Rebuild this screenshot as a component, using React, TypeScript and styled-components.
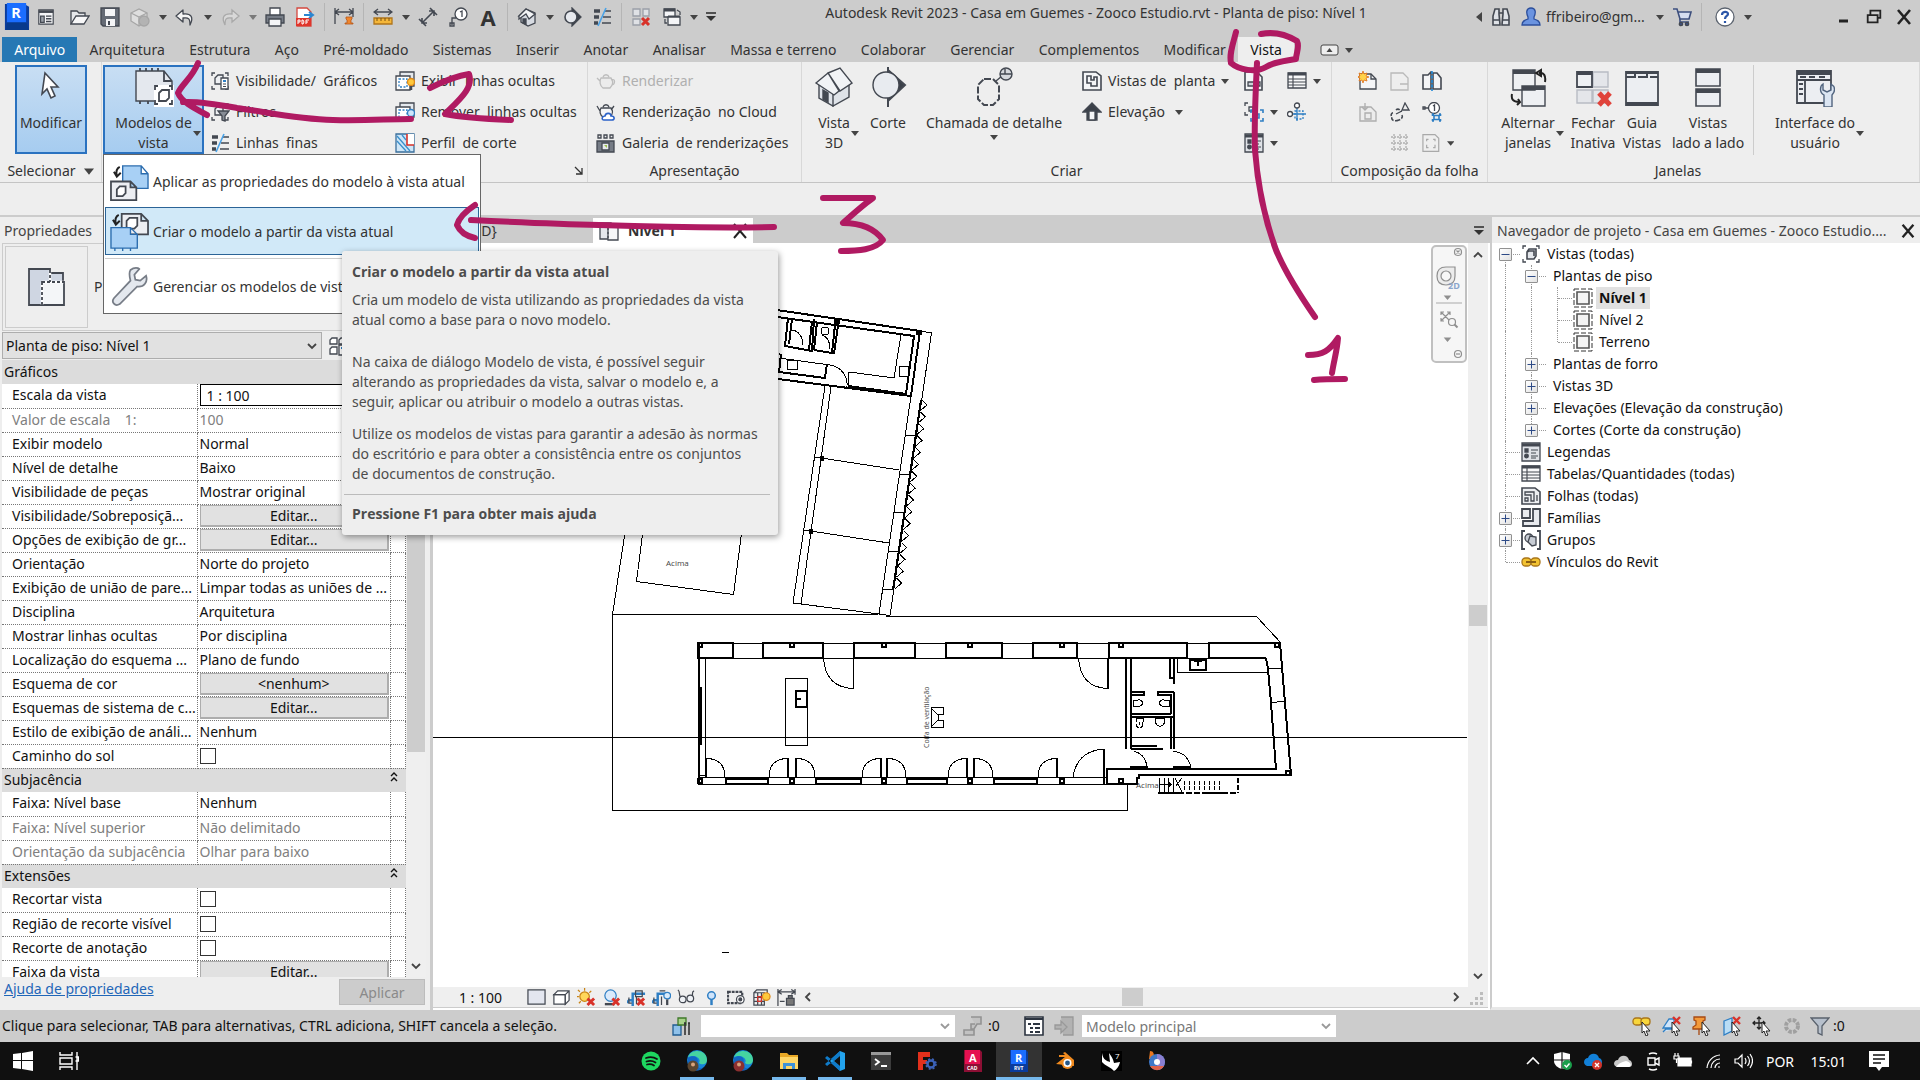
import React from "react";
import styled, { createGlobalStyle, css } from "styled-components";

const INK = "#434851";
const BLUE = "#2f7fc4";
const RED = "#d8322a";
const MARK = "#b01a62";

const Global = createGlobalStyle`
  *, *::before, *::after { box-sizing: border-box; }
  html, body { margin: 0; padding: 0; }
  body, button, input, select { font-family: "Noto Sans", "Open Sans", sans-serif; font-size: 14px; color: #333; }
  button { background: none; border: 0; padding: 0; margin: 0; cursor: default; white-space: nowrap; }
`;

/* ---------- icons ---------- */

const house = (
  <>
    <path d="M2 9 9 2l9 4v10l-7 3-7-4V9z" fill="#d7dbe2" />
    <path d="M2 9 9 2l9 5-6 5-3-5-7 5z" fill="#f3f4f6" />
    <path d="M6 12h3v5l-3-1z" fill={INK} />
  </>
);
const thinLines = (
  <>
    <path d="M2 4h6M2 10h5M2 16h4" strokeWidth="3.4" />
    <path d="M13 4h6M11 10h8M10 16h9" strokeWidth="1.4" />
    <path d="M14 1 6 19" stroke="#4aa3e8" strokeWidth="1.6" />
  </>
);
const sheet = <path d="M2 3h11l5 5v10H2z" fill="#f4f5f7" />;
const redX = <path d="m11 11 7 7m0-7-7 7" stroke={RED} strokeWidth="3" />;
const cursor = <path d="m10 6 8 9h-4l2 4-2 1-2-5-2 2z" fill="#fff" stroke="#222" strokeWidth="1" />;
const corners = <path d="M5 2H2v3M15 2h3v3M5 18H2v-3M15 18h3v-3" />;

const glyphs: Record<string, React.ReactNode> = {
  home: (
    <>
      <path d="M2 2h16v16H2z" fill="#f4f5f7" />
      <path d="M2 4h16" strokeWidth="3" />
      <path d="M4 9h4v7H4z" fill="#9aa0a8" />
      <path d="M10 9h6M10 12h6M10 15h6" strokeWidth="1.6" />
    </>
  ),
  open: (
    <>
      <path d="M1 17V4h6l2 2h6v3" fill="#e5e7ea" />
      <path d="M1 17 6 9h13l-5 8z" fill="#f7f7f8" />
    </>
  ),
  save: (
    <>
      <path d="M1 1h18v18H3l-2-2z" fill="#656b75" />
      <path d="M5 2h10v7H5z" fill="#f4f5f7" stroke="none" />
      <path d="M6 12h9v7H6z" fill="#f4f5f7" stroke="none" />
      <path d="M8 14h2v4H8z" fill={INK} stroke="none" />
    </>
  ),
  sync: (
    <g stroke="#a6a6a6">
      <path d="m1 6 8-4 8 4v8l-8 5-8-5z" fill="#dedede" />
      <path d="m1 6 8 4 8-4M9 10v9" />
      <circle cx="14" cy="14" r="5" fill="#b3b3b3" />
    </g>
  ),
  undo: <path d="M8 3 1 9l7 6v-4c6-1 7 1 7 7 4-8 1-12-7-11z" fill="#f4f4f4" strokeLinejoin="round" />,
  redo: <path d="m12 3 7 6-7 6v-4c-6-1-7 1-7 7-4-8-1-12 7-11z" fill="#d8d8d8" stroke="#a9a9a9" />,
  print: (
    <>
      <path d="M5 8V1h10v7" fill="#fff" />
      <path d="M1 8h18v8H1z" fill="#767c86" />
      <path d="M4 12h12v7H4z" fill="#f4f5f7" />
    </>
  ),
  pdf: (
    <>
      <path d="M2 1h10l4 4v14H2z" fill="#fff" stroke="#d4483f" />
      <path d="M1 11h15v8H1z" fill="#e0352b" stroke="none" />
      <path d="M9 8h8m-3-3 4 3-4 3" stroke="#2b86d1" strokeWidth="2" />
      <path d="M3 17v-4h2v2H3m4 2v-4h1l1 2-1 2zm4 0v-4h3m-3 2h2" stroke="#fff" strokeWidth="1" />
    </>
  ),
  dim: (
    <>
      <path d="M1 1v16M19 1v9M1 5h18M5 2 1 5l4 3M15 2l4 3-4 3" />
      <path d="M12 10h6v2l-1 1v3h2v1h-8v-1h2v-3l-1-1z" fill="#f0862e" stroke="#b4551a" strokeWidth=".8" />
    </>
  ),
  ruler: (
    <>
      <path d="M1 5h18M5 2 1 5l4 3M15 2l4 3-4 3" />
      <path d="M1 11h18v6H1z" fill="#f5b73a" stroke="#b0761b" />
      <path d="M4 11v3M8 11v3M12 11v3M16 11v3" stroke="#7a5212" strokeWidth="1" />
    </>
  ),
  diag: <path d="M4 16 16 4M1 12l7 7M12 1l7 7M4 11v5h5M11 4h5v5" strokeWidth="1.6" />,
  tag: (
    <>
      <circle cx="13" cy="7" r="6" fill="#fff" />
      <path d="m12 5 2-1v6M4 18v-7h4M2 16h4v3H2z" />
    </>
  ),
  house,
  section: (
    <>
      <path d="m10 1 9 9-9 9z" fill="#3b4049" />
      <circle cx="9" cy="10" r="6" fill="#e6e9ee" strokeWidth="1.6" />
    </>
  ),
  thinLines,
  closeInactive: (
    <>
      <path d="M2 2h7v7H2zM12 2h6v7h-6zM2 12h7v6H2z" fill="#dfe1e5" stroke="#9a9fa8" />
      {redX}
    </>
  ),
  switchWin: (
    <>
      <path d="M3 2h11v8H3z" fill="#f4f5f7" />
      <path d="M3 3h11M7 10h12" strokeWidth="3" />
      <path d="M7 10h12v8H7zM16 3l3 2v3M4 12v4h2" fill="#f4f5f7" />
    </>
  ),
  binoculars: (
    <>
      <path d="M4 2h4v5l1 11H2V9zM16 2h-4v5l-1 11h7V9z" fill="#dfe2e7" strokeWidth="1.6" />
      <path d="M2 13h7M11 13h7M8 6h4" strokeWidth="1.6" />
    </>
  ),
  user: (
    <path d="M10 1c5 0 5 5 3 9v2c3 1 6 2 6 6H1c0-4 3-5 6-6v-2C5 6 5 1 10 1z" fill="#6a93e0" stroke="#2c4f9c" />
  ),
  cart: (
    <>
      <path d="M1 2h4l3 10h9l2-7H6" fill="#d6def0" stroke="#3d4f7d" strokeWidth="1.6" />
      <path d="M8 12v3h9" stroke="#3d4f7d" strokeWidth="1.6" />
      <circle cx="9" cy="17" r="1.7" fill="#3d4f7d" />
      <circle cx="15" cy="17" r="1.7" fill="#3d4f7d" />
    </>
  ),
  help: (
    <>
      <circle cx="10" cy="10" r="9" fill="#fff" stroke="#5c6470" />
      <path d="M7 8c0-4 6-4 6-1 0 2-3 2-3 5m0 2v2" stroke="#2b56a8" strokeWidth="2.2" />
    </>
  ),
  minimize: <path d="M5 14h9" stroke="#222" strokeWidth="3" />,
  restore: (
    <>
      <path d="M6 3h11v8H6z" stroke="#222" strokeWidth="2" />
      <path d="M3 8h11v8H3z" fill="#ccc" stroke="#222" strokeWidth="2" />
    </>
  ),
  close: <path d="m4 3 12 14M16 3 4 17" stroke="#222" strokeWidth="2.6" />,
  closeThin: <path d="m4 3 12 14M16 3 4 17" stroke="#222" strokeWidth="2" />,
  visibility: (
    <>
      {corners}
      <path d="M5 7l3-3h5v9H5z" fill="#eef0f3" />
      <path d="M11 7h7v11h-7z" fill="#fff" />
      <path d="M13 10h3" stroke={BLUE} strokeWidth="2" />
      <path d="M13 13h3M13 15.500h3" strokeWidth="1" />
    </>
  ),
  filter: (
    <>
      {corners}
      <path d="M5 7l3-3h5v9H5z" fill="#eef0f3" />
      <path d="M8 9h11l-4 5v5l-3-1v-4z" fill="#868c95" />
    </>
  ),
  hiddenShow: (
    <>
      <path d="M5 1h14v14H5z" fill="#e5e9ee" />
      <path d="M1 5h14v14H1z" fill="#fff" />
      <path d="M4 8h8v8H4z" stroke={BLUE} strokeDasharray="2 1.500" />
      <circle cx="16" cy="11" r="3.500" fill="#ffc93d" stroke="#e08a1a" />
      <path d="M16 15v4" strokeWidth="2.500" />
    </>
  ),
  hiddenRemove: (
    <>
      <path d="M5 1h14v14H5z" fill="#e5e9ee" />
      <path d="M1 5h14v14H1z" fill="#fff" />
      <path d="M4 8h8v8H4z" stroke={BLUE} strokeDasharray="2 1.500" />
      <circle cx="16" cy="11" r="3.500" fill="#cfe5fa" stroke={BLUE} />
      <path d="M16 15v4" strokeWidth="2.500" />
    </>
  ),
  cutProfile: (
    <>
      <path d="M1 1h18v18H1z" fill="#cfe6f7" stroke="#3a6f9c" />
      <path d="m2 8 9 10M2 3l13 15M7 2l4 5" stroke="#3a8fcc" />
      <path d="M12 1h7v11h-7z" fill="#fff" stroke="none" />
      <path d="M12 1v11h7" stroke={RED} strokeWidth="1.600" />
    </>
  ),
  teapot: (
    <g stroke="#bdbdbd">
      <path d="M5 7h10c3 4 1 8-1 10H7C4 15 3 10 5 7zM7 6c1-3 5-3 6 0M4 10 1 7M15 9c5-2 4 4 1 5" fill="#ececec" />
    </g>
  ),
  teapotCloud: (
    <>
      <path d="M5 6h10c3 4 1 7-1 9H7C4 13 3 9 5 6zM7 5c1-3 5-3 6 0M4 9 1 4M15 8l3-4" fill="#f4f5f7" />
      <path d="M8 18c-3 0-2-4 1-4 1-4 6-3 6 0 4 0 4 4 1 4z" fill="#fff" stroke="#2b62c9" strokeWidth="1.600" />
    </>
  ),
  gallery: (
    <>
      <path d="M1 8h17v11H1z" fill="#767c86" />
      <path d="M2 2h3v3H2zM8 2h3v3H8zM14 2h3v3h-3z" />
      <path d="M6 10h7v7H6z" fill="#e8eaed" />
      <path d="M8 12h3v3z" fill="#9ac04b" stroke="none" />
    </>
  ),
  plan: (
    <>
      <path d="M1 1h13l5 4v14H1z" fill="#f4f5f7" strokeWidth="1.600" />
      <path d="M5 5h4v4h3V6h3v9H9v-3H5z" strokeWidth="1.600" />
    </>
  ),
  elevation: (
    <>
      <path d="M10 1 1 10h4v8h10v-8h4z" fill="#3b4049" />
      <path d="M7 9h6v9H7z" fill="#f4f5f7" />
    </>
  ),
  draft: (
    <>
      <path d="M1 1h12l5 5v13H1z" fill="#f4f5f7" strokeWidth="1.600" />
      <path d="M4 11h12v4H4z" fill="#cdd1d8" />
    </>
  ),
  duplicate: (
    <>
      <path d="M4 1H1v3M10 1h3M1 10v3h3M5 5h4v4H5z" />
      <path d="M10 8H7v3M16 8h3v3M7 16v3h3M19 16v3h-3M11 12h4v4h-4z" stroke={BLUE} strokeWidth="1.600" />
    </>
  ),
  legend: (
    <>
      <path d="M1 1h18v18H1z" fill="#dfe2e7" />
      <path d="M1 3h18" strokeWidth="3" />
      <path d="M4 7h3v3H4z" fill={INK} />
      <circle cx="5.500" cy="14" r="1.800" fill={INK} />
      <path d="M10 8h7M10 11h5M10 14h7M10 16h5" strokeWidth="1.200" />
    </>
  ),
  schedule: (
    <>
      <path d="M1 2h18v15H1z" fill="#f8f8f9" />
      <path d="M1 3h18" strokeWidth="3" />
      <path d="M1 8h18M1 11h18M1 14h18M6 3v14" strokeWidth="1.100" />
    </>
  ),
  scope: (
    <>
      <path d="M8 9h8v8H8z" stroke={BLUE} strokeDasharray="2 1.500" />
      <path d="M10 6v13M4 12h15" stroke={BLUE} />
      <circle cx="10" cy="3.500" r="2.500" fill="#fff" />
      <circle cx="3" cy="12" r="2.500" fill="#fff" />
    </>
  ),
  sheetNew: (
    <>
      {sheet}
      <path d="M13 3v5h5" />
      <path d="m5 0 1 3 3-1-1 3 3 1-3 1 1 3-3-1-1 3-1-3-3 1 1-3-3-1 3-1-1-3 3 1z" fill="#ffd24a" stroke="#e0701a" strokeWidth=".8" />
    </>
  ),
  titleBlock: (
    <g stroke="#b9b9b9">
      <path d="M1 2h12l5 5v12H1zM10 13h8v6" />
    </g>
  ),
  matchline: (
    <>
      <path d="M1 4h5l3-3v17H1zM19 7l-4-5h-4v16h8z" fill="#f4f5f7" strokeWidth="1.600" />
      <path d="M10 0v20" stroke="#1f88d8" strokeWidth="1.600" strokeDasharray="3 1.500" />
    </>
  ),
  revision: (
    <g stroke="#adadad">
      <path d="M2 5h11l5 5v9H2z" fill="#ececec" />
      <path d="M7 1v6m-3-2 3 3 3-3M7 11h6v6H7z" />
    </g>
  ),
  placeView: (
    <>
      <path d="M9 18c-5 2-8 0-7-3-2-2 0-5 2-4M6 8c2-2 5 0 5 2M12 13c1 2 0 4-3 5" strokeDasharray="4 1.500" strokeWidth="1.600" />
      <path d="m15 1 4 7h-7zM6 12l6-3" />
    </>
  ),
  guide: (
    <>
      <circle cx="12" cy="6" r="5.500" fill="#fff" />
      <path d="m11 4 1.500-1v6M1 5h2v2H1zM3 6h3" />
      <path d="M10 12h2M17 12h2M10 19h2M17 19h2M12 13.500h5v4h-5zM10.500 12v2M18.500 12v2M10.500 17v2M18.500 17v2" stroke={BLUE} strokeWidth="1.600" />
    </>
  ),
  gridFaint: <path d="M4 1v18M10 1v18M16 1v18M1 4h18M1 10h18M1 16h18" stroke="#aeaeae" strokeDasharray="2 1" />,
  viewport: (
    <g stroke="#a9a9a9">
      <path d="M1 1h13l4 4v14H1z" fill="#efefef" />
      <path d="M5 8V6h2M12 6h2v2M14 12v3h-2M7 15H5v-3" />
    </g>
  ),
  editType: (
    <>
      <path d="M2 4l2-2h5v6H2zM11 4l2-2h5v6h-7zM2 13l2-2h5v7H2z" fill="#fff" />
      <path d="M11 9h8v10h-8z" fill="#fff" />
      <path d="M13 12h4" stroke={BLUE} strokeWidth="2" />
    </>
  ),
  tabPlan: (
    <>
      <path d="M1 2h11v16H1z" fill="#e4e7ec" />
      <path d="M9 6h10v13H9z" fill="#f6f7f9" />
      <path d="M9 3v16" strokeDasharray="2 2" />
    </>
  ),
  views: (
    <>
      {corners}
      <path d="M6 8l2-3h7v7l-2 3H6zM6 8l2-1h5v5" fill="#e4e7ec" strokeWidth="1.600" />
    </>
  ),
  level: (
    <>
      <path d="M1 1h18v18H1z" stroke="#333" strokeWidth="1" strokeDasharray="5 2" />
      <path d="M4 4h12v12H4z" fill="#f4f4f4" stroke="#555" strokeWidth="1.600" />
    </>
  ),
  sheets: (
    <>
      <path d="M1 2h13l5 4v12H1z" fill="#eceef1" strokeWidth="1.600" />
      <path d="M4 6h9v9h-3V9H4zM4 12h3v3H4zM16 9v6" />
    </>
  ),
  families: <path d="M1 1h8v9H1zM12 1h7v17H2v-5h10z" fill="#e8eaee" strokeWidth="1.800" />,
  groups: (
    <>
      <path d="M4 1H1v18h3M16 1h3v18h-3" strokeWidth="1.800" />
      <circle cx="8" cy="8" r="4" fill="#c7ccd4" />
      <path d="m9 6 6 1v8l-4 1-4-4z" fill="#c7ccd4" />
    </>
  ),
  links: (
    <>
      <rect x="1" y="6" width="9" height="8" rx="3.500" fill="#f2c231" stroke="#a9761a" />
      <rect x="10" y="6" width="9" height="8" rx="3.500" fill="#f2c231" stroke="#a9761a" />
      <path d="M5 10h10" stroke="#8b5f12" strokeWidth="2" />
    </>
  ),
  detail: <path d="M1 2h18v15H1z" fill="#e3e6ef" />,
  cube: (
    <>
      <path d="M2 7h12v10H2z" fill="#fff" />
      <path d="m2 7 4-4h12v10l-4 4V7zM14 7l4-4" fill="#fff" />
    </>
  ),
  sun: (
    <>
      <circle cx="8" cy="9" r="5" fill="#ffd75a" stroke="#c98414" />
      <path d="M8 0v3M1 2l2 2M0 9h2M2 16l2-2M15 3l-2 2" stroke="#c98414" />
      {redX}
    </>
  ),
  shadow: (
    <>
      <circle cx="9" cy="8" r="6" fill="#dbeafb" stroke={BLUE} />
      <path d="M3 17h10" strokeWidth="2.500" />
      {redX}
    </>
  ),
  crop: (
    <>
      <path d="M6 19V6h13M1 13h5M1 16V13" stroke={BLUE} strokeWidth="2.600" />
      <path d="M9 3h7v6H9zM2 10v6h3M10 9v8" />
      {redX}
    </>
  ),
  cropShow: (
    <>
      <path d="M6 19V6h10M1 13h5M1 16V13" stroke={BLUE} strokeWidth="2.600" />
      <path d="M8 3h6M2 10v6h3M10 9v9" />
      <circle cx="16" cy="8" r="3.500" fill="#d9ebfb" stroke={BLUE} />
      <path d="M16 12v6" strokeWidth="2.400" />
    </>
  ),
  glasses: (
    <>
      <path d="M1 2c3 3 0 4 3 8M18 3c-3 1-1 3-2 6" />
      <circle cx="6" cy="12" r="3.500" fill="#eef1f5" />
      <circle cx="14" cy="11" r="3.500" fill="#eef1f5" />
    </>
  ),
  bulb: (
    <>
      <circle cx="10" cy="8" r="4" fill="#cfe4fb" stroke={BLUE} strokeWidth="1.600" />
      <path d="M10 12v6" stroke={BLUE} strokeWidth="2.600" />
    </>
  ),
  tempView: (
    <>
      <path d="M1 4h15v12H1z" strokeWidth="2.400" strokeDasharray="3 1" />
      <circle cx="14" cy="12" r="4" fill="#fff" />
      <circle cx="14" cy="12" r="1.500" fill={INK} />
    </>
  ),
  analytic: (
    <>
      <path d="M2 5h11v13H2zM2 10h11M2 14h11M6 5v13M10 5v13M2 5l3-3h11v8" />
      <path d="M6 9h4v5H6z" stroke={RED} />
      <circle cx="15" cy="9" r="4" fill="#ffc93d" stroke="#e08a1a" />
    </>
  ),
  constraints: (
    <>
      <path d="M1 1v18M19 1v6M1 4h18M5 1.500 1 4l4 2.500M15 1.500 19 4l-4 2.500M3 14h5" />
      <path d="M10 11h8v7h-8zM12 11V8h4v3" fill="#777" />
    </>
  ),
  worksets: (
    <>
      <path d="M1 9h8v10H1z" fill="#8fc1ea" stroke="#1f5c92" />
      <path d="M6 2h8v7H6z" fill="#a8d28a" stroke="#3f7a2a" />
      <path d="M13 7v12M17 7v12M12 7h2M16 7h2" stroke="#333" strokeWidth="1.600" />
    </>
  ),
  requests: <path d="M8 1h10v7h-4l-3 5H8V8h4M1 19h10v-5H1z" stroke="#939393" fill="#c2c2c2" strokeWidth="1.600" />,
  options: (
    <>
      <path d="M1 1h18v18H1z" fill="#fff" stroke="#2c3440" strokeWidth="1.600" />
      <path d="M1 3h18M4 8h3M9 8h7M6 12h3M11 12h5M6 16h3M11 16h5" stroke="#2c3440" strokeWidth="2" />
    </>
  ),
  addOption: <path d="M7 1h12v18H9M1 9h6V5l6 6-6 6v-4H1z" stroke="#999" fill="#b2b2b2" />,
  selLinks: (
    <>
      <rect x="1" y="2" width="9" height="7" rx="3" fill="#f8d63c" stroke="#a9761a" />
      <rect x="9" y="2" width="9" height="7" rx="3" fill="#f8d63c" stroke="#a9761a" />
      {cursor}
    </>
  ),
  selUnder: (
    <>
      <path d="m1 12 6-9h5v9zM1 16l3-3h8" fill="#cfe5fa" stroke={BLUE} />
      <path d="m11 1 7 7m0-7-7 7" stroke={RED} strokeWidth="2.400" />
      {cursor}
    </>
  ),
  selPinned: (
    <>
      <path d="M2 1h11v3l-2 1v4l3 2v2H1v-2l3-2V5L2 4zM7 13v6" fill="#f39a3a" stroke="#a84a12" />
      {cursor}
    </>
  ),
  selFace: (
    <>
      <path d="m2 5 8-3v13l-8 4z" fill="#b9ddf5" stroke={BLUE} />
      <path d="m11 1 7 7m0-7-7 7" stroke={RED} strokeWidth="2.400" />
      {cursor}
    </>
  ),
  selDrag: (
    <>
      <path d="M7 1v12M1 7h12M5 3l2-2 2 2M5 11l2 2 2-2M3 5 1 7l2 2M11 5l2 2-2 2" stroke="#222" />
      {cursor}
    </>
  ),
  progress: <circle cx="10" cy="10" r="6" stroke="#a0a0a0" strokeWidth="4" strokeDasharray="3.400 1.300" />,
  funnel: <path d="M1 2h18l-7 8v9l-4-2v-7z" fill="#b7c0cc" stroke="#59616c" />,
};

const largeGlyphs: Record<string, React.ReactNode> = {
  pointer: <path d="m14 6 13 14h-7l4 9-4 2-4-9-5 5z" fill="#fff" stroke={INK} strokeWidth="1.600" />,
  viewTemplate: (
    <>
      <path d="M2 4h28l8 10v20H2z" fill="#e4e8ee" />
      <path d="M30 4v10h8M6 1v3M12 1v3M18 1v3M24 1v3M6 34v3M14 34v3" strokeWidth="1.800" />
      <path d="M20 18h20v22H20z" fill="#fff" stroke="none" />
      <path d="M24 19h-3v4M35 19h3v4M21 33v4h3M38 33v4h-3M25 26l3-3h7v8l-3 3h-7z" strokeWidth="1.800" />
    </>
  ),
  house3d: (
    <>
      <path d="m5 17 14 7v15L5 31zM19 24l16-8v14l-16 9z" fill="#dfe3e9" />
      <path d="M2 16 14 6l11 18-5 4zM14 6 26 1l12 15-12 8z" fill="#f1f3f6" />
      <path d="m9 23 5 3v9l-5-3z" fill={INK} />
    </>
  ),
  sectionMark: (
    <>
      <path d="m20 3 17 15-17 16zM20 0v40" fill="#3b4049" strokeWidth="2" />
      <circle cx="18" cy="18" r="13" fill="#e8ebf0" />
    </>
  ),
  callout: (
    <>
      <path d="M10 12h9l6 6v14l-6 6h-9l-6-6V18z" strokeWidth="2" strokeDasharray="7 2" />
      <path d="m22 14 6-5" />
      <circle cx="32" cy="7" r="6" fill="#d5d8dd" />
      <path d="M26 7h12M31 2v5" />
    </>
  ),
  switchLarge: (
    <>
      <path d="M5 3h22v20H5zM14 19h23v20H14z" fill="#eef0f3" />
      <path d="M5 5h22M14 21h23" strokeWidth="4" />
      <path d="M31 6c5-1 7 3 6 9M28 6l5-3v6zM4 27c-1 5 1 8 7 8m-1-3 2 3-3 3" stroke="#222" strokeWidth="2" />
    </>
  ),
  closeLarge: (
    <>
      <path d="M20 5h15v15H20zM4 23h15v13H4zM20 23h15v13H20z" fill="#e4e6ea" stroke="#b8bcc4" />
      <path d="M4 5h15v15H4zM4 7h15" fill="#eef0f3" strokeWidth="1.800" />
      <path d="m26 26 11 12m0-12-11 12" stroke="#e0433b" strokeWidth="5" />
    </>
  ),
  guideTabs: (
    <>
      <path d="M4 5h32v33H4z" fill="#eceef2" strokeWidth="1.800" />
      <path d="M4 6h32M4 10h9V6M16 10h9V6M28 10h8" strokeWidth="2" />
      <path d="M4 37h32" strokeWidth="4" />
    </>
  ),
  tileWindows: (
    <>
      <path d="M8 2h24v17H8zM8 22h24v17H8z" fill="#eceef2" strokeWidth="1.600" />
      <path d="M8 4h24M8 24h24" strokeWidth="4" />
    </>
  ),
  interface: (
    <>
      <path d="M2 4h34v32H2z" fill="#eceef2" strokeWidth="1.800" />
      <path d="M2 6h34" strokeWidth="4" />
      <path d="M2 13h34M10 13v23M5 10h6M14 10h6M24 10h6M4 17h4M4 22h4M4 27h4" strokeWidth="1.800" />
      <path d="M28 17v6l4 2 4-2v-6c5 3 4 8 1 11v12h-8V28c-5-3-4-9-1-11z" fill="#dbe5f2" stroke="#51647e" />
    </>
  ),
  applyTemplate: (
    <>
      <path d="M13 4h19l7 8v15H13zM32 4v8h7" fill="#a8d0f5" stroke="#2b6cae" />
      <path d="M1 20h20l6 6v13H1zM21 20v6h6" fill="#eceef2" strokeWidth="1.800" />
      <path d="m7 28 3-3h6v7l-3 3H7z" fill="#fff" strokeWidth="1.800" />
      <path d="M10 5c-4 2-4 5-3 9m-3-4 3 5 4-4" stroke="#222" strokeWidth="2" />
    </>
  ),
  createTemplate: (
    <>
      <path d="M12 2h20l7 7v14H12zM32 2v7h7" fill="#eceef2" strokeWidth="1.800" />
      <path d="m17 9 3-3h8v8l-3 3h-8z" fill="#fff" strokeWidth="1.800" />
      <path d="M1 16h20l7 7v14H1zM21 16v7h7M5 37v3M13 37v3M21 37v3" fill="#a8d0f5" stroke="#2b6cae" />
      <path d="M9 3c-4 2-4 5-3 9m-3-4 3 5 4-4" stroke="#222" strokeWidth="2" />
    </>
  ),
  wrench: (
    <path d="M21 3c4-3 8-2 9-1l-5 6 1 5 5 1 6-5c2 6-2 12-9 11L10 38c-5 3-9-2-6-6l17-18c-1-4-2-8 0-11z" fill="#e4e8ee" stroke="#777d87" strokeWidth="1.800" />
  ),
  floorPlan: (
    <>
      <path d="M2 2h21v4h13v32H2z" fill="#cfd6e2" strokeWidth="1.800" />
      <path d="M15 15h22v23H15z" fill="#f4f6f8" strokeWidth="1.800" />
      <path d="M23 3v12M15 15v23M15 15h22" stroke="#fff" strokeWidth="2.400" />
      <path d="M23 3v12M15 15v23M15 15h22" strokeWidth="1.800" strokeDasharray="3 2" />
    </>
  ),
};

const Glyph = ({ name, size = 20 }: { name: string; size?: number }) => (
  <svg width={size} height={size} viewBox="0 0 20 20" fill="none" stroke={INK} strokeWidth="1.3" aria-hidden="true">
    {glyphs[name]}
  </svg>
);
const LargeGlyph = ({ name, size = 40 }: { name: string; size?: number }) => (
  <svg width={size} height={size} viewBox="0 0 40 40" fill="none" stroke={INK} strokeWidth="1.4" aria-hidden="true">
    {largeGlyphs[name]}
  </svg>
);
const Arrow = ({ size = 8, color = "#444" }: { size?: number; color?: string }) => (
  <svg width={size} height={size} viewBox="0 0 8 8" aria-hidden="true">
    <path d="M0 2h8L4 7z" fill={color} />
  </svg>
);
const ListArrow = () => (
  <svg width="12" height="12" viewBox="0 0 12 12" aria-hidden="true">
    <path d="M1 2h10" stroke="#333" strokeWidth="1.600" />
    <path d="M1 5h10l-5 5z" fill="#333" />
  </svg>
);
const Chevron = ({ turn = 0, color = "#444" }: { turn?: number; color?: string }) => (
  <svg width="12" height="12" viewBox="0 0 12 12" fill="none" stroke={color} strokeWidth="1.800" aria-hidden="true">
    <path d="m2 4 4 4 4-4" transform={`rotate(${turn} 6 6)`} />
  </svg>
);

/* ---------- shell ---------- */

const Shell = styled.div`
  position: relative;
  height: 100vh;
  display: flex;
  flex-direction: column;
  overflow: hidden;
  background: #eee;
  line-height: 20px;
`;

const Bar = styled.header`
  display: flex;
  align-items: center;
  height: 33px;
  background: #ccc;
  padding-right: 1px;
`;
const Logo = styled.div`
  width: 31px;
  padding-left: 3px;
  display: flex;
`;
const Slot = styled.button<{ $w?: number; $dim?: boolean }>`
  width: ${(p) => p.$w ?? 30}px;
  height: 28px;
  flex: none;
  display: flex;
  align-items: center;
  justify-content: center;
  font-size: ${(p) => (p.$w ? 14 : 22)}px;
  font-weight: 700;
  opacity: ${(p) => (p.$dim ? 0.6 : 1)};
`;
const Split = styled.span`
  width: 1px;
  height: 28px;
  margin: 0 4px;
  flex: none;
  background: #b5b5b5;
`;
const Gap = styled.span<{ $w: number }>`
  width: ${(p) => p.$w}px;
  flex: none;
`;
const Title = styled.h1`
  flex: 1;
  margin: 0;
  text-align: center;
  font-size: 14px;
  font-weight: 400;
  line-height: 20px;
  padding-bottom: 8px;
  white-space: nowrap;
`;
const Account = styled.button`
  width: 106px;
  text-align: left;
`;

const Tabs = styled.nav`
  display: flex;
  height: 29px;
  padding-top: 4px;
  background: #ccc;
`;
const TabList = styled.div`
  display: flex;
  flex: 0 1 1294px;
  padding-left: 2px;
`;
const Tab = styled.button<{ $kind?: "file" | "active" }>`
  flex: 1 1 auto;
  padding: 0 4px;
  ${(p) => p.$kind === "file" && css`background: #2678b4; color: #fff;`}
  ${(p) => p.$kind === "active" && css`background: #eee; color: #111;`}
`;
const TabTools = styled.div`
  display: flex;
  align-items: center;
  gap: 6px;
  padding-left: 26px;
`;

/* ---------- ribbon ---------- */

const Ribbon = styled.section`
  display: flex;
  height: 121px;
  flex: none;
  background: #eee;
  border-bottom: 1px solid #c4c4c4;
`;
const Panel = styled.div<{ $w?: number }>`
  display: flex;
  flex-direction: column;
  width: ${(p) => (p.$w ? `${p.$w}px` : "auto")};
  flex: ${(p) => (p.$w ? "none" : 1)};
  border-right: 1px solid #d8d8d8;
`;
const PanelBody = styled.div<{ $pad?: number }>`
  display: flex;
  height: 97px;
  padding: 3px 0 0 ${(p) => p.$pad ?? 0}px;
`;
const PanelTitle = styled.div`
  height: 23px;
  display: flex;
  align-items: center;
  justify-content: center;
  gap: 8px;
`;
const Launcher = styled.button`
  margin-left: auto;
  padding-right: 4px;
  display: flex;
`;
const Column = styled.div<{ $w: number }>`
  width: ${(p) => p.$w}px;
  flex: none;
  display: flex;
  flex-direction: column;
`;
const Small = styled.button<{ $off?: boolean }>`
  height: 31px;
  display: flex;
  align-items: center;
  gap: 6px;
  white-space: pre;
  color: ${(p) => (p.$off ? "#b0b0b0" : "#333")};
`;
const Large = styled.button<{ $w: number; $on?: boolean }>`
  width: ${(p) => p.$w}px;
  height: 89px;
  flex: none;
  display: flex;
  flex-direction: column;
  align-items: center;
  padding-top: 1px;
  border: 1px solid transparent;
  ${(p) => p.$on && css`border: 2px solid #2a72c0; padding-top: 0; background: linear-gradient(#c8def3, #a6ccf0);`}
  svg { flex: none; }
`;
const LargeLabel = styled.span`
  display: grid;
  grid-template-columns: 10px auto 10px;
  align-items: center;
  justify-items: center;
  line-height: 20px;
  white-space: pre;
  margin-top: 6px;
`;
const CompGrid = styled.div`
  display: grid;
  grid-template-columns: repeat(3, 32px) 14px;
  grid-auto-rows: 31px;
  padding-left: 20px;
`;
const Rule = styled.span`
  width: 1px;
  height: 90px;
  margin: 0 3px;
  background: #ccc;
`;
const MenuAnchor = styled.div`
  position: relative;
  z-index: 5;
`;
const Menu = styled.div`
  position: absolute;
  left: 0;
  top: 89px;
  width: 378px;
  background: #fff;
  border: 1px solid #666;
  padding: 1px;
`;
const MenuItem = styled.button<{ $on?: boolean }>`
  display: flex;
  align-items: center;
  gap: 4px;
  width: 100%;
  height: ${(p) => (p.$on ? 48 : 51)}px;
  padding-left: 4px;
  border: 1px solid ${(p) => (p.$on ? "#2b6497" : "transparent")};
  background: ${(p) => (p.$on ? "#d1e9f8" : "#fff")};
`;
const MenuRule = styled.hr`
  margin: 3px 0 2px;
  border: 0;
  border-top: 1px solid #ccc;
`;
const Tooltip = styled.div`
  position: absolute;
  left: 238px;
  top: 96px;
  width: 436px;
  padding: 11px 8px 11px 10px;
  background: #eee;
  border-radius: 3px;
  box-shadow: 1px 2px 6px rgba(0, 0, 0, 0.4);
  color: #4c4c4c;
  white-space: nowrap;
  line-height: 20px;
`;
const TipTitle = styled.strong`
  display: block;
  font-family: "Open Sans", "Noto Sans", sans-serif;
`;
const TipText = styled.p<{ $top: number }>`
  margin: ${(p) => p.$top}px 0 0;
`;
const TipRule = styled.hr`
  margin: 10px 0 9px -8px;
  border: 0;
  border-top: 1px solid #bbb;
`;
const OptionsBar = styled.div`
  height: 34px;
  flex: none;
  background: #eee;
  border-bottom: 2px solid #ccc;
`;

/* ---------- workspace ---------- */

const Work = styled.main`
  flex: 1;
  min-height: 0;
  display: flex;
`;
const Props = styled.aside`
  width: 433px;
  flex: none;
  display: flex;
  flex-direction: column;
  border-right: 3px solid #ccc;
  padding-left: 2px;
  background: #eee;
`;
const PaneHead = styled.h2`
  margin: 0;
  height: 26px;
  padding: 2px 2px 0;
  display: flex;
  align-items: center;
  font-size: 14px;
  font-weight: 400;
  white-space: nowrap;
  color: #444;
  background: #eee;
  flex: none;
`;
const TypeBox = styled.div`
  display: flex;
  align-items: center;
  gap: 6px;
  height: 88px;
  flex: none;
  border: 1px solid #ccc;
  padding-left: 2px;
`;
const TypeThumb = styled.div`
  width: 83px;
  height: 82px;
  display: flex;
  align-items: center;
  justify-content: center;
  border: 1px solid #ccc;
`;
const InstanceRow = styled.div`
  display: flex;
  align-items: center;
  gap: 6px;
  height: 29px;
  flex: none;
`;
const SelectWrap = styled.span<{ $w: number; $h: number }>`
  position: relative;
  display: block;
  width: ${(p) => p.$w}px;
  height: ${(p) => p.$h}px;
  flex: none;
  svg { position: absolute; right: 4px; top: 50%; margin-top: -6px; pointer-events: none; }
`;
const Select = styled.select<{ $plain?: boolean }>`
  appearance: none;
  width: 100%;
  height: 100%;
  padding: 0 3px;
  border: 1px solid ${(p) => (p.$plain ? "#fff" : "#adadad")};
  border-radius: 0;
  background: ${(p) => (p.$plain ? "#fff" : "#e1e1e1")};
  color: ${(p) => (p.$plain ? "#777" : "#111")};
  opacity: 1;
`;
const GridArea = styled.div`
  flex: 1;
  min-height: 0;
  overflow: hidden;
  display: flex;
  padding-right: 4px;
`;
const GridClip = styled.div`
  flex: 1;
  overflow: hidden;
  background: #fff;
`;
const PropTable = styled.table`
  width: 100%;
  table-layout: fixed;
  border-collapse: collapse;
  color: #111;
`;
const Head = styled.th`
  height: 24px;
  padding: 0 8px 0 2px;
  background: #dcdcdc;
  font-weight: 400;
  text-align: left;
`;
const HeadLine = styled.div`
  display: flex;
  justify-content: space-between;
  align-items: center;
  svg { margin-bottom: 6px; }
`;
const Cell = styled.td<{ $off?: boolean; $name?: boolean }>`
  height: 24px;
  padding: 0 0 1px ${(p) => (p.$name ? 10 : 2)}px;
  overflow: hidden;
  white-space: pre;
  line-height: 20px;
  color: ${(p) => (p.$off ? "#808080" : "#111")};
  border-right: 1px dotted #777;
  border-bottom: 1px dotted #777;
`;
const EditButton = styled.button`
  display: block;
  width: calc(100% - 1px);
  height: 22px;
  background: #e1e1e1;
  border: 1px solid #adadad;
  border-right-width: 2px;
  border-bottom-width: 2px;
  line-height: 19px;
  color: #111;
`;
const ScaleInput = styled.input`
  display: block;
  width: 100%;
  height: 22px;
  border: 1px solid #000;
  padding: 0 6px;
  color: #111;
`;
const Check = styled.input`
  appearance: none;
  display: block;
  width: 16px;
  height: 16px;
  margin: 0;
  border: 1px solid #333;
  background: #fff;
`;
const VTrack = styled.div`
  width: 20px;
  flex: none;
  display: flex;
  flex-direction: column;
  align-items: center;
  justify-content: space-between;
  padding: 6px 0 5px;
  background: #efefef;
`;
const PropTrack = styled(VTrack)`
  padding-top: 0;
`;
const PropThumb = styled.div`
  width: 18px;
  height: 392px;
  background: #cdcdcd;
`;
const PropFoot = styled.div`
  height: 33px;
  flex: none;
  display: flex;
  justify-content: space-between;
  align-items: flex-start;
  padding: 2px 5px 0 2px;
  a { color: #1f66b8; }
`;
const Apply = styled.button`
  width: 86px;
  height: 26px;
  background: #ccc;
  border: 1px solid #bcbcbc;
  color: #8a8a8a;
`;

const Centre = styled.section`
  flex: 1;
  min-width: 0;
  display: flex;
  flex-direction: column;
  background: #fff;
  padding-bottom: 2px;
`;
const DocTabs = styled.div`
  display: flex;
  align-items: flex-end;
  height: 26px;
  flex: none;
  background: #ccc;
`;
const DocTab = styled.button<{ $on?: boolean }>`
  display: flex;
  align-items: center;
  gap: 9px;
  width: 160px;
  height: 25px;
  padding: 0 3px 0 6px;
  font-weight: ${(p) => (p.$on ? 700 : 400)};
  background: ${(p) => (p.$on ? "#fff" : "none")};
  svg + svg { margin-left: auto; }
`;
const DocMore = styled.button`
  margin: 0 5px 6px auto;
  display: flex;
`;
const CanvasRow = styled.div`
  flex: 1;
  min-height: 0;
  display: flex;
  padding-right: 2px;
`;
const Canvas = styled.div`
  position: relative;
  flex: 1;
  min-width: 0;
  overflow: hidden;
`;
const Plan = styled.svg`
  display: block;
  text { font-family: "Open Sans", sans-serif; fill: #444; stroke: none; }
`;
const NavBar = styled.div`
  position: absolute;
  right: 1px;
  top: 2px;
  width: 36px;
  height: 118px;
  border: 2px solid #c0c0c0;
  border-radius: 5px;
  background: #f6f6f6;
`;
const ViewBar = styled.div`
  display: flex;
  align-items: center;
  height: 21px;
  flex: none;
  margin-right: 2px;
  background: #efefef;
  border-bottom: 1px solid #ccc;
  color: #111;
`;
const Scale = styled.button`
  width: 91px;
  padding-left: 4px;
  color: #111;
`;
const HTrack = styled.div`
  flex: 1;
  display: flex;
  align-items: center;
  justify-content: space-between;
  padding-left: 3px;
  height: 100%;
`;
const HThumb = styled.span`
  width: 21px;
  height: 18px;
  background: #cdcdcd;
`;
const VThumb = styled.span`
  width: 18px;
  height: 21px;
  background: #cdcdcd;
`;

const Browser = styled.aside`
  width: 430px;
  flex: none;
  display: flex;
  flex-direction: column;
  border-left: 2px solid #ccc;
  border-bottom: 3px solid #e8e8e8;
  background: #fff;
`;
const BrowserHead = styled(PaneHead)`
  padding-left: 5px;
  justify-content: space-between;
`;
const Tree = styled.ul`
  list-style: none;
  margin: 0;
  padding: 0;
`;
const Node = styled.li`
  display: flex;
  height: 22px;
  align-items: center;
  color: #111;
`;
const Guide = styled.span<{ $line: "none" | "full" | "half" | "low"; $tick?: boolean }>`
  position: relative;
  width: 26px;
  height: 22px;
  flex: none;
  display: flex;
  align-items: center;
  justify-content: center;
  &::before {
    content: "";
    position: absolute;
    left: 13px;
    top: ${(p) => (p.$line === "low" ? 11 : 0)}px;
    height: ${(p) => (p.$line === "full" ? 22 : 11)}px;
    border-left: ${(p) => (p.$line === "none" ? "0" : "1px dotted #999")};
  }
  &::after {
    content: "";
    position: absolute;
    left: 14px;
    width: 14px;
    top: 11px;
    border-top: ${(p) => (p.$tick ? "1px dotted #999" : "0")};
  }
`;
const Toggle = styled.button`
  position: relative;
  z-index: 1;
  width: 13px;
  height: 13px;
  border: 1px solid #919191;
  border-radius: 1px;
  background: linear-gradient(135deg, #fff, #e2e2e2);
  display: flex;
  svg { display: block; }
`;
const Caption = styled.span<{ $on?: boolean }>`
  padding: 0 3px;
  line-height: 22px;
  white-space: nowrap;
  font-weight: ${(p) => (p.$on ? 700 : 400)};
  background: ${(p) => (p.$on ? "#e1e1e1" : "none")};
`;

/* ---------- bottom bars ---------- */

const Status = styled.footer`
  display: flex;
  align-items: center;
  height: 32px;
  flex: none;
  background: #ccc;
  color: #111;
`;
const Hint = styled.span`
  width: 667px;
  padding-left: 2px;
  white-space: nowrap;
`;
const Fill = styled.span`
  flex: 1;
`;
const Count = styled.span<{ $w: number }>`
  width: ${(p) => p.$w}px;
`;
const Task = styled.footer`
  display: grid;
  grid-template-columns: 628px 1fr auto;
  height: 38px;
  flex: none;
  background: #101010;
  color: #fff;
`;
const TaskGroup = styled.div`
  display: flex;
  align-items: center;
`;
const TaskApp = styled.button<{ $run?: boolean; $on?: boolean }>`
  width: 46px;
  height: 38px;
  display: flex;
  align-items: center;
  justify-content: center;
  background: ${(p) => (p.$on ? "#333" : "none")};
  position: relative;
  &::after {
    content: "";
    position: absolute;
    bottom: 0;
    left: ${(p) => (p.$on ? 0 : 6)}px;
    right: ${(p) => (p.$on ? 0 : 6)}px;
    height: ${(p) => (p.$run ? 3 : 0)}px;
    background: #76b9ed;
  }
`;
const Tray = styled.button<{ $w?: number }>`
  width: ${(p) => p.$w ?? 30}px;
  height: 38px;
  display: flex;
  align-items: center;
  justify-content: center;
  color: #fff;
`;
const Marks = styled.svg`
  position: absolute;
  left: 0;
  top: 0;
  z-index: 10;
  pointer-events: none;
`;

/* ---------- data ---------- */

const tabs = ["Arquivo", "Arquitetura", "Estrutura", "Aço", "Pré-moldado", "Sistemas", "Inserir", "Anotar", "Analisar", "Massa e terreno", "Colaborar", "Gerenciar", "Complementos", "Modificar", "Vista"];

type Prop = { n: string; v?: string; t?: "edit" | "check" | "input"; off?: boolean };
const sections: { title: string; rows: Prop[] }[] = [
  {
    title: "Gráficos",
    rows: [
      { n: "Escala da vista", v: "1 : 100", t: "input" },
      { n: "Valor de escala    1:", v: "100", off: true },
      { n: "Exibir modelo", v: "Normal" },
      { n: "Nível de detalhe", v: "Baixo" },
      { n: "Visibilidade de peças", v: "Mostrar original" },
      { n: "Visibilidade/Sobreposiçã...", v: "Editar...", t: "edit" },
      { n: "Opções de exibição de gr...", v: "Editar...", t: "edit" },
      { n: "Orientação", v: "Norte do projeto" },
      { n: "Exibição de união de pare...", v: "Limpar todas as uniões de ..." },
      { n: "Disciplina", v: "Arquitetura" },
      { n: "Mostrar linhas ocultas", v: "Por disciplina" },
      { n: "Localização do esquema ...", v: "Plano de fundo" },
      { n: "Esquema de cor", v: "<nenhum>", t: "edit" },
      { n: "Esquemas de sistema de c...", v: "Editar...", t: "edit" },
      { n: "Estilo de exibição de análi...", v: "Nenhum" },
      { n: "Caminho do sol", t: "check" },
    ],
  },
  {
    title: "Subjacência",
    rows: [
      { n: "Faixa: Nível base", v: "Nenhum" },
      { n: "Faixa: Nível superior", v: "Não delimitado", off: true },
      { n: "Orientação da subjacência", v: "Olhar para baixo", off: true },
    ],
  },
  {
    title: "Extensões",
    rows: [
      { n: "Recortar vista", t: "check" },
      { n: "Região de recorte visível", t: "check" },
      { n: "Recorte de anotação", t: "check" },
      { n: "Faixa da vista", v: "Editar...", t: "edit" },
    ],
  },
];

type TreeItem = { depth: number; text: string; icon?: string; open?: boolean; toggle?: boolean; on?: boolean; lines: ("none" | "full" | "half" | "low")[] };
const tree: TreeItem[] = [
  { depth: 0, text: "Vistas (todas)", icon: "views", toggle: true, open: true, lines: ["low"] },
  { depth: 1, text: "Plantas de piso", toggle: true, open: true, lines: ["full", "full"] },
  { depth: 2, text: "Nível 1", icon: "level", on: true, lines: ["full", "full", "full"] },
  { depth: 2, text: "Nível 2", icon: "level", lines: ["full", "full", "full"] },
  { depth: 2, text: "Terreno", icon: "level", lines: ["full", "full", "half"] },
  { depth: 1, text: "Plantas de forro", toggle: true, lines: ["full", "full"] },
  { depth: 1, text: "Vistas 3D", toggle: true, lines: ["full", "full"] },
  { depth: 1, text: "Elevações (Elevação da construção)", toggle: true, lines: ["full", "full"] },
  { depth: 1, text: "Cortes (Corte da construção)", toggle: true, lines: ["full", "half"] },
  { depth: 0, text: "Legendas", icon: "legend", lines: ["full"] },
  { depth: 0, text: "Tabelas/Quantidades (todas)", icon: "schedule", lines: ["full"] },
  { depth: 0, text: "Folhas (todas)", icon: "sheets", lines: ["full"] },
  { depth: 0, text: "Famílias", icon: "families", toggle: true, lines: ["full"] },
  { depth: 0, text: "Grupos", icon: "groups", toggle: true, lines: ["full"] },
  { depth: 0, text: "Vínculos do Revit", icon: "links", lines: ["half"] },
];

/* ---------- parts ---------- */

const RevitLogo = ({ size = 27 }: { size?: number }) => (
  <svg width={size} height={size} viewBox="0 0 28 28" aria-hidden="true">
    <path d="M2 1h20l5 3v24H2z" fill="#0b3c9c" />
    <path d="M4 0h20v21H4z" fill="#1a6dff" />
    <path d="M4 20h20l3 8H3z" fill="#083a8c" />
    <text x="8.500" y="16" fontFamily="Open Sans" fontSize="15" fontWeight="700" fill="#fff">R</text>
  </svg>
);

function LargeButton({ w, icon, label, arrow, below, on }: { w: number; icon: string; label: string; arrow?: boolean; below?: boolean; on?: boolean }) {
  return (
    <Large $w={w} $on={on}>
      <LargeGlyph name={icon} />
      <LargeLabel>
        <span />
        <span>{label}</span>
        {arrow ? <Arrow /> : <span />}
      </LargeLabel>
      {below && <Arrow />}
    </Large>
  );
}

function SmallButton({ icon, label, arrow, off }: { icon: string; label?: string; arrow?: boolean; off?: boolean }) {
  return (
    <Small $off={off} aria-label={label ?? icon}>
      <Glyph name={icon} />
      {label}
      {arrow && <Arrow />}
    </Small>
  );
}

function TitleBar() {
  return (
    <Bar>
      <Logo><RevitLogo /></Logo>
      <Slot aria-label="Início"><Glyph name="home" size={18} /></Slot>
      <Gap $w={4} />
      <Slot aria-label="Abrir"><Glyph name="open" /></Slot>
      <Slot aria-label="Salvar"><Glyph name="save" /></Slot>
      <Slot aria-label="Sincronizar"><Glyph name="sync" /></Slot>
      <Slot $w={15} aria-label="Mais"><Arrow /></Slot>
      <Slot aria-label="Desfazer"><Glyph name="undo" /></Slot>
      <Slot $w={15} aria-label="Mais"><Arrow /></Slot>
      <Slot aria-label="Refazer"><Glyph name="redo" /></Slot>
      <Slot $w={15} $dim aria-label="Mais"><Arrow /></Slot>
      <Slot aria-label="Imprimir"><Glyph name="print" /></Slot>
      <Slot aria-label="Exportar PDF"><Glyph name="pdf" /></Slot>
      <Split />
      <Slot aria-label="Medir"><Glyph name="dim" /></Slot>
      <Split />
      <Slot aria-label="Régua"><Glyph name="ruler" /></Slot>
      <Slot $w={15} aria-label="Mais"><Arrow /></Slot>
      <Slot aria-label="Cota alinhada"><Glyph name="diag" /></Slot>
      <Slot aria-label="Identificador"><Glyph name="tag" /></Slot>
      <Slot>A</Slot>
      <Split />
      <Slot aria-label="Vista 3D"><Glyph name="house" /></Slot>
      <Slot $w={15} aria-label="Mais"><Arrow /></Slot>
      <Slot aria-label="Corte"><Glyph name="section" /></Slot>
      <Slot aria-label="Linhas finas"><Glyph name="thinLines" /></Slot>
      <Split />
      <Slot aria-label="Fechar inativas"><Glyph name="closeInactive" /></Slot>
      <Slot aria-label="Alternar janelas"><Glyph name="switchWin" /></Slot>
      <Slot $w={15} aria-label="Mais"><Arrow /></Slot>
      <Slot $w={20} aria-label="Personalizar"><ListArrow /></Slot>
      <Title>Autodesk Revit 2023 - Casa em Guemes - Zooco Estudio.rvt - Planta de piso: Nível 1</Title>
      <Slot $w={15} aria-label="Recolher">
        <svg width="6" height="10" viewBox="0 0 6 10"><path d="M6 0v10L0 5z" fill="#444" /></svg>
      </Slot>
      <Slot aria-label="Pesquisar"><Glyph name="binoculars" /></Slot>
      <Slot aria-label="Conta"><Glyph name="user" /></Slot>
      <Account>ffribeiro@gm...</Account>
      <Slot $w={15} aria-label="Mais"><Arrow /></Slot>
      <Slot aria-label="Loja"><Glyph name="cart" /></Slot>
      <Split />
      <Gap $w={4} />
      <Slot aria-label="Ajuda"><Glyph name="help" /></Slot>
      <Slot $w={15} aria-label="Mais"><Arrow /></Slot>
      <Gap $w={74} />
      <Slot aria-label="Minimizar"><Glyph name="minimize" /></Slot>
      <Slot aria-label="Restaurar"><Glyph name="restore" size={18} /></Slot>
      <Slot aria-label="Fechar"><Glyph name="close" /></Slot>
    </Bar>
  );
}

function RibbonBar() {
  return (
    <Ribbon>
      <Panel $w={102}>
        <PanelBody $pad={15}>
          <LargeButton w={72} icon="pointer" label="Modificar" on />
        </PanelBody>
        <PanelTitle>Selecionar <Arrow size={10} /></PanelTitle>
      </Panel>
      <Panel $w={486}>
        <PanelBody $pad={1}>
          <MenuAnchor>
            <LargeButton w={101} icon="viewTemplate" label={"Modelos de\nvista"} arrow on />
            <Menu>
              <MenuItem><LargeGlyph name="applyTemplate" size={39} />Aplicar as propriedades do modelo à vista atual</MenuItem>
              <MenuItem $on><LargeGlyph name="createTemplate" size={39} />Criar o modelo a partir da vista atual</MenuItem>
              <MenuRule />
              <MenuItem><LargeGlyph name="wrench" size={39} />Gerenciar os modelos de vista</MenuItem>
              <Tooltip role="tooltip">
                <TipTitle>Criar o modelo a partir da vista atual</TipTitle>
                <TipText $top={8}>Cria um modelo de vista utilizando as propriedades da vista<br />atual como a base para o novo modelo.</TipText>
                <TipText $top={22}>Na caixa de diálogo Modelo de vista, é possível seguir<br />alterando as propriedades da vista, salvar o modelo e, a<br />seguir, aplicar ou atribuir o modelo a outras vistas.</TipText>
                <TipText $top={12}>Utilize os modelos de vistas para garantir a adesão às normas<br />do escritório e para obter a consistência entre os conjuntos<br />de documentos de construção.</TipText>
                <TipRule />
                <TipTitle>Pressione F1 para obter mais ajuda</TipTitle>
              </Tooltip>
            </Menu>
          </MenuAnchor>
          <Gap $w={6} />
          <Column $w={185}>
            <SmallButton icon="visibility" label="Visibilidade/  Gráficos" />
            <SmallButton icon="filter" label="Filtros" />
            <SmallButton icon="thinLines" label="Linhas  finas" />
          </Column>
          <Column $w={190}>
            <SmallButton icon="hiddenShow" label="Exibir  linhas ocultas" />
            <SmallButton icon="hiddenRemove" label="Remover  linhas ocultas" />
            <SmallButton icon="cutProfile" label="Perfil  de corte" />
          </Column>
        </PanelBody>
        <PanelTitle>
          <Launcher aria-label="Opções de gráficos">
            <svg width="9" height="9" viewBox="0 0 9 9" fill="none" stroke="#333" strokeWidth="1.300"><path d="m1 1 7 7M8 2v6H2" /></svg>
          </Launcher>
        </PanelTitle>
      </Panel>
      <Panel $w={214}>
        <PanelBody $pad={8}>
          <Column $w={200}>
            <SmallButton icon="teapot" label="Renderizar" off />
            <SmallButton icon="teapotCloud" label="Renderização  no Cloud" />
            <SmallButton icon="gallery" label="Galeria  de renderizações" />
          </Column>
        </PanelBody>
        <PanelTitle>Apresentação</PanelTitle>
      </Panel>
      <Panel $w={530}>
        <PanelBody $pad={5}>
          <LargeButton w={54} icon="house3d" label={"Vista\n3D"} arrow />
          <LargeButton w={54} icon="sectionMark" label="Corte" />
          <LargeButton w={158} icon="callout" label="Chamada de detalhe" below />
          <Gap $w={9} />
          <Column $w={162}>
            <SmallButton icon="plan" label="Vistas de  planta" arrow />
            <SmallButton icon="elevation" label="Elevação " arrow />
          </Column>
          <Column $w={43}>
            <SmallButton icon="draft" />
            <SmallButton icon="duplicate" arrow />
            <SmallButton icon="legend" arrow />
          </Column>
          <Column $w={43}>
            <SmallButton icon="schedule" arrow />
            <SmallButton icon="scope" />
          </Column>
        </PanelBody>
        <PanelTitle>Criar</PanelTitle>
      </Panel>
      <Panel $w={156}>
        <PanelBody $pad={6}>
          <CompGrid>
            <SmallButton icon="sheetNew" />
            <SmallButton icon="titleBlock" />
            <SmallButton icon="matchline" />
            <span />
            <SmallButton icon="revision" />
            <SmallButton icon="placeView" />
            <SmallButton icon="guide" />
            <span />
            <span />
            <SmallButton icon="gridFaint" />
            <SmallButton icon="viewport" arrow />
          </CompGrid>
        </PanelBody>
        <PanelTitle>Composição da folha</PanelTitle>
      </Panel>
      <Panel>
        <PanelBody>
          <LargeButton w={80} icon="switchLarge" label={"Alternar\njanelas"} arrow />
          <LargeButton w={50} icon="closeLarge" label={"Fechar\nInativa"} />
          <LargeButton w={48} icon="guideTabs" label={"Guia\nVistas"} />
          <LargeButton w={84} icon="tileWindows" label={"Vistas\nlado a lado"} />
          <Rule />
          <LargeButton w={116} icon="interface" label={"Interface do\nusuário"} arrow />
        </PanelBody>
        <PanelTitle><Column $w={380}><PanelTitle>Janelas</PanelTitle></Column><Fill /></PanelTitle>
      </Panel>
    </Ribbon>
  );
}

function PropCell({ p, id }: { p: Prop; id: string }) {
  if (p.t === "edit") return <EditButton id={id}>{p.v}</EditButton>;
  if (p.t === "check") return <Check type="checkbox" id={id} />;
  if (p.t === "input") return <ScaleInput id={id} defaultValue={p.v} />;
  return <>{p.v}</>;
}

function Properties() {
  return (
    <Props>
      <PaneHead>Propriedades</PaneHead>
      <TypeBox>
        <TypeThumb><LargeGlyph name="floorPlan" /></TypeThumb>
        Planta de piso
      </TypeBox>
      <InstanceRow>
        <SelectWrap $w={320} $h={27}>
          <Select aria-label="Vista" defaultValue="n1"><option value="n1">Planta de piso: Nível 1</option></Select>
          <Chevron />
        </SelectWrap>
        <Glyph name="editType" />
        Editar tipo
      </InstanceRow>
      <GridArea>
        <GridClip>
          <PropTable>
            <colgroup><col width="195" /><col /><col width="15" /></colgroup>
            {sections.map((s, i) => (
              <tbody key={s.title}>
                <tr>
                  <Head colSpan={3}>
                    <HeadLine>
                      {s.title}
                      <svg width="8" height="10" viewBox="0 0 8 10" fill="none" stroke="#111" strokeWidth="1.400"><path d="m1 4 3-3 3 3M1 9l3-3 3 3" /></svg>
                    </HeadLine>
                  </Head>
                </tr>
                {s.rows.map((p, j) => {
                  const id = `prop-${i}-${j}`;
                  return (
                    <tr key={p.n}>
                      <Cell $name $off={p.off}>{p.t ? <label htmlFor={id}>{p.n}</label> : p.n}</Cell>
                      <Cell $off={p.off}><PropCell p={p} id={id} /></Cell>
                      <Cell />
                    </tr>
                  );
                })}
              </tbody>
            ))}
          </PropTable>
        </GridClip>
        <PropTrack>
          <PropThumb />
          <Chevron />
        </PropTrack>
      </GridArea>
      <PropFoot>
        <a href="#ajuda">Ajuda de propriedades</a>
        <Apply disabled>Aplicar</Apply>
      </PropFoot>
    </Props>
  );
}

const columns = [[700, 645], [792, 645], [884, 645], [970, 645], [1062, 645], [1121, 645], [1277, 645], [700, 781], [792, 781], [884, 781], [970, 781], [1062, 781], [1121, 781], [1288, 773]];
const topWalls = [[698, 733], [763, 823], [854, 915], [946, 1002], [1033, 1077], [1109, 1187]];
const sills = [[726, 768], [816, 861], [907, 947], [994, 1037]];
const leftDoors = [796, 887, 974, 706];
const rightDoors = [788, 881, 967, 1057];
const louvres = Array.from({ length: 16 }, (_, i) => {
  const t = i / 16;
  const x = 922 - 27 * t;
  const y = 400 + 190 * t;
  return `M${x} ${y}l5 5-7 6`;
}).join("");

function FloorPlan() {
  return (
    <Plan width="1035" height="744" viewBox="433 243 1035 744" fill="none" stroke="#000" strokeWidth="1" shapeRendering="crispEdges" aria-label="Planta de piso: Nível 1">
      <path d="M630 500 612.500 614.500V810.500H1127.500V784M612.500 614.500H878M886 616.500H1256.500L1281 643M433 737.500H1467M722 952.500h7" />
      <path d="M643 530 636.500 581.500 733.500 594.500 742 530" />
      <text x="666" y="566" fontSize="8">Acima</text>
      <path d="M770 309 920 331 911 396 770 378" strokeWidth="2" />
      <path d="M770 316 914 336 906 394 848 386M788 318l-3 28 27 5 2-32M792 319l-3 25M812 321l-3 29M817 322l-3 28M835 325l-3 28-18-3M838 326l-4 28M779 354l2 1-2 17 46 6 2-14" strokeWidth="2" />
      <path d="M920 331l11.500 2L922 398M901 335l-7 43-45-6-1 15M779 358l51 7c12 2 18 12 17 22M791 330c8 0 12 8 12 15M822 335c6 2 8 8 8 14M787 360h10v9h-10zM899 366h9v10h-9z" />
      <circle cx="825" cy="331" r="4" />
      <path d="M825 386 793 603 879 614 911 396M831 387 801 604M922 398 890 615.500 879 614M815 457l84 13M804 530l85 13M905 435l11 1M900 474l10 1M894 512l11 1M888 551l10 1M883 589l10 1" />
      <path d="m921 400-28 190" strokeWidth="2" />
      <path d={louvres} />
      <path d="M820 456h3v4h-3zM809 529h3v4h-3zM834 319h5v4h-5zM916 330h5v4h-5z" fill="#000" />

      {topWalls.map(([a, b]) => <path key={a} d={`M${a} 643H${b}V658H${a}z`} strokeWidth="2" />)}
      <path d="M1266 658H1209V643H1280L1291 775H1139V778H1137V784H1107V769H1276L1271 703M1266 658l2 11 3 34" strokeWidth="2" />
      <path d="M698 643.500H1280M698 658.500H1209M1267 669l15-1M1270 703l15-2M698 777.500H1107M698 784.500H1128" />
      <path d="M699 642V784M1126 658V749M1131 658V749M1170 658v20h4v6M1174 658v20M1131 692h13v3h-13M1174 692h-16v3h13v19M1131 714h40M1131 717h43M1174 692v57M1171 717v32M1131 746h26M1131 749h32" strokeWidth="2" />
      <path d="M705.500 658V777M1177.500 658v14H1267M698 775h8" />
      <path d="M700.500 687v58" strokeWidth="2" />
      {sills.map(([a, b]) => <path key={a} d={`M${a} 779h${b - a}v5H${a}z`} strokeWidth="2" />)}
      {columns.map(([x, y]) => <path key={`${x}-${y}`} d={`M${x - 2} ${y - 2}h4v4h-4z`} strokeWidth="2" />)}
      {leftDoors.map((x) => <path key={x} d={`M${x} 758.500q19 0 19 19`} />)}
      {rightDoors.map((x) => <path key={x} d={`M${x} 758.500q-19 0-19 19`} />)}
      {[...leftDoors, ...rightDoors].map((x) => <path key={x} d={`M${x} 758v19`} strokeWidth="2" />)}
      <path d="M823.500 658q2 30 30.500 30.500M1078.500 658q2 30 30 30.500M1073 777q4-26 31-28M1134 751q12 4 13 16M1173 751q15 2 18 16M853.500 658v31" />
      <path d="M1108 658v31M1104 749v35M1130 767h18M1173 767h18" strokeWidth="2" />

      <path d="M785.500 678.500h22V745.500h-22z" />
      <path d="M796 691h11v16h-11zM1190 660h16v10h-16z" strokeWidth="2" />
      <path d="M796 699h5M1194 661h8M1198 661v5" strokeWidth="2" />
      <path d="M931.500 707.500h12v7h-5v6h5v7h-12zM931 708l7 7M931 727l7-7" />
      <path d="M1133 700h5c6-1 6 7 0 6h-5zM1169 700h-5c-6-1-6 7 0 6h5zM1136 718v4c-1 8 8 8 7 0v-4zM1155 718c-1 11 11 11 10 0zM1139 722v3" />
      <path d="M1159 778v15h12M1164 778v15M1168.500 778v15M1173.500 778v15M1159 784.500h12l-3-3m3 3-3 3M1175 778l8 16M1182 778l-6 8" />
      <path d="M1178 775H1238V793" strokeWidth="2" strokeDasharray="5 2" />
      <path d="M1158 793h80" strokeWidth="2" strokeDasharray="26 2 6 2 6 2" />
      <path d="M1184.500 781v9M1189.500 781v9M1194.500 781v9M1199.500 781v9M1204.500 781v9M1209.500 781v9M1214.500 781v9M1219.500 781v9" strokeDasharray="4 1" />
      <text x="1136" y="788" fontSize="8">Acima</text>
      <text transform="translate(929 748) rotate(-90)" fontSize="7">Coifa de ventilação</text>
    </Plan>
  );
}

function Drawing() {
  const viewTools = ["detail", "cube", "sun", "shadow", "crop", "cropShow", "glasses", "bulb", "tempView", "analytic", "constraints"];
  return (
    <Centre>
      <DocTabs>
        <DocTab><Glyph name="house" />{"{3D}"}</DocTab>
        <DocTab $on><Glyph name="tabPlan" />Nível 1<Glyph name="closeThin" /></DocTab>
        <DocMore aria-label="Lista de vistas"><ListArrow /></DocMore>
      </DocTabs>
      <CanvasRow>
        <Canvas>
          <FloorPlan />
          <NavBar>
            <svg width="32" height="114" viewBox="0 0 32 114" fill="none" stroke="#8f8f8f" strokeWidth="1.200">
              <circle cx="25" cy="5" r="3.500" /><path d="m23.500 3.500 3 3m0-3-3 3" />
              <path d="M13 20h9v9c0 6-3 9-9 9s-9-3-9-9 3-9 9-9z" fill="#ececec" />
              <circle cx="13" cy="29" r="5" fill="#f8f8f8" />
              <text x="15" y="42" fontSize="9" fontWeight="700" fill="#8aa5cc" stroke="none" fontFamily="Open Sans">2D</text>
              <path d="M12 49h5l-2.500 3z" fill="#8f8f8f" />
              <path d="M3 56h26" stroke="#b8b8b8" />
              <path d="m8 65 9 9m0-9-9 9M8 68v-3h3M14 65h3v3M8 71v3h3" />
              <circle cx="19" cy="75" r="3.500" fill="#f6f6f6" /><path d="m21.500 77.500 3 3" strokeWidth="2" />
              <path d="M12 91h5l-2.500 3z" fill="#8f8f8f" />
              <circle cx="25" cy="107" r="3.500" /><path d="M23 107h4" />
            </svg>
          </NavBar>
        </Canvas>
        <VTrack>
          <Chevron turn={180} />
          <VThumb />
          <Chevron />
        </VTrack>
      </CanvasRow>
      <ViewBar>
        <Scale>1 : 100</Scale>
        {viewTools.map((n) => <Slot key={n} $w={25} aria-label={n}><Glyph name={n} size={19} /></Slot>)}
        <HTrack>
          <Chevron turn={90} />
          <HThumb />
          <Chevron turn={-90} />
        </HTrack>
        <svg width="26" height="20" viewBox="0 0 26 20" fill="#bdbdbd">
          <path d="M8 15h3v3H8zM13 15h3v3h-3zM18 15h3v3h-3zM13 10h3v3h-3zM18 10h3v3h-3zM18 5h3v3h-3z" />
        </svg>
      </ViewBar>
    </Centre>
  );
}

function ProjectBrowser() {
  return (
    <Browser>
      <BrowserHead>
        Navegador de projeto - Casa em Guemes - Zooco Estudio....
        <Slot $w={20} aria-label="Fechar"><Glyph name="close" size={18} /></Slot>
      </BrowserHead>
      <Tree>
        {tree.map((n) => (
          <Node key={n.text}>
            {n.lines.map((l, i) => (
              <Guide key={i} $line={l} $tick={i === n.depth}>
                {n.toggle && i === n.depth && (
                  <Toggle aria-label={n.text}>
                    <svg width="11" height="11" viewBox="0 0 11 11" stroke="#2d4a86">
                      <path d={n.open ? "M1.500 5.500h8" : "M1.500 5.500h8M5.500 1.500v8"} />
                    </svg>
                  </Toggle>
                )}
              </Guide>
            ))}
            <Gap $w={n.icon ? 3 : 6} />
            {n.icon && <Glyph name={n.icon} />}
            {n.icon && <Gap $w={3} />}
            <Caption $on={n.on}>{n.text}</Caption>
          </Node>
        ))}
      </Tree>
    </Browser>
  );
}

function StatusBar() {
  return (
    <Status>
      <Hint>Clique para selecionar, TAB para alternativas, CTRL adiciona, SHIFT cancela a seleção.</Hint>
      <Slot aria-label="Worksets"><Glyph name="worksets" /></Slot>
      <Gap $w={4} />
      <SelectWrap $w={254} $h={22}>
        <Select $plain aria-label="Workset ativo"><option> </option></Select>
        <Chevron color="#999" />
      </SelectWrap>
      <Gap $w={3} />
      <Slot aria-label="Solicitações"><Glyph name="requests" /></Slot>
      <Count $w={31}>:0</Count>
      <Slot aria-label="Opções de projeto"><Glyph name="options" /></Slot>
      <Slot aria-label="Adicionar à opção"><Glyph name="addOption" /></Slot>
      <Gap $w={3} />
      <SelectWrap $w={254} $h={22}>
        <Select $plain aria-label="Opção ativa"><option>Modelo principal</option></Select>
        <Chevron color="#999" />
      </SelectWrap>
      <Fill />
      {["selLinks", "selUnder", "selPinned", "selFace", "selDrag", "progress"].map((n) => (
        <Slot key={n} aria-label={n}><Glyph name={n} /></Slot>
      ))}
      <Slot $w={26} aria-label="Filtro"><Glyph name="funnel" /></Slot>
      <Count $w={87}>:0</Count>
    </Status>
  );
}

const EdgeIcon = ({ face }: { face: string }) => (
  <svg width="22" height="22" viewBox="0 0 22 22">
    <circle cx="11" cy="10" r="10" fill="#1683d8" />
    <path d="M2 7C5-2 21-1 21 10c0 5-6 5-8 3 3-5-5-9-11-6z" fill="#45d3a0" />
    <path d="M2 8c6-4 12 0 9 5-1 3 2 6 6 5-6 6-17 2-15-10z" fill="#1166c4" />
    <circle cx="7" cy="16" r="5.500" fill={face} />
    <circle cx="7" cy="14.500" r="2" fill="#d8a37c" />
  </svg>
);

const taskIcons: { name: string; run?: boolean; on?: boolean; art: React.ReactNode }[] = [
  {
    name: "Spotify",
    art: (
      <svg width="20" height="20" viewBox="0 0 20 20" fill="none" stroke="#111" strokeWidth="1.800" strokeLinecap="round">
        <circle cx="10" cy="10" r="9.500" fill="#1ed760" stroke="none" />
        <path d="M5 7q6-2 11 1M5.500 10.500q5-1.500 9 1M6 13.500q4-1 7 1" />
      </svg>
    ),
  },
  { name: "Edge", run: true, art: <EdgeIcon face="#5b4630" /> },
  { name: "Edge perfil 2", art: <EdgeIcon face="#8c3030" /> },
  {
    name: "Explorador",
    run: true,
    art: (
      <svg width="20" height="20" viewBox="0 0 20 20">
        <path d="M1 2h7l2 2h9v14H1z" fill="#e9a825" />
        <path d="M1 6h18v12H1z" fill="#ffd667" />
        <path d="M4 18v-6h12v6h-3v-3H7v3z" fill="#3f92d8" />
      </svg>
    ),
  },
  {
    name: "VS Code",
    run: true,
    art: (
      <svg width="22" height="22" viewBox="0 0 22 22">
        <path d="m16 1 5 2v16l-5 2L6 11z" fill="#23a3ee" />
        <path d="m1 8 2-2 13 10v5zM1 14l2 2L16 6V1z" fill="#0f7bc9" />
        <path d="M16 6v10l-6-5z" fill="#101010" />
      </svg>
    ),
  },
  {
    name: "Terminal",
    art: (
      <svg width="20" height="20" viewBox="0 0 20 20">
        <path d="M0 1h20v18H0z" fill="#3c3c3c" /><path d="M0 1h20v3H0z" fill="#999" />
        <path d="m4 8 4 3-4 3M10 15h6" stroke="#fff" strokeWidth="1.800" fill="none" />
      </svg>
    ),
  },
  {
    name: "FreeCAD",
    art: (
      <svg width="20" height="20" viewBox="0 0 20 20">
        <path d="M1 1h12v5H6v3h4v4H6v6H1z" fill="#e3301c" />
        <circle cx="14" cy="13" r="3.500" fill="none" stroke="#3c62b8" strokeWidth="2.400" />
        <circle cx="14" cy="13" r="5" fill="none" stroke="#3c62b8" strokeWidth="1.500" strokeDasharray="2 2" />
      </svg>
    ),
  },
  {
    name: "AutoCAD",
    art: (
      <svg width="20" height="22" viewBox="0 0 20 22">
        <path d="M1 0h16l2 2v20H1z" fill="#8c0f34" /><path d="M2 0h15v14H2z" fill="#e51050" />
        <text x="6" y="12" fontFamily="Open Sans" fontSize="11" fontWeight="700" fill="#fff">A</text>
        <text x="4" y="20" fontFamily="Open Sans" fontSize="5" fontWeight="700" fill="#fff">CAD</text>
      </svg>
    ),
  },
  {
    name: "Revit",
    run: true,
    on: true,
    art: (
      <svg width="20" height="22" viewBox="0 0 20 22">
        <path d="M1 0h16l2 2v20H1z" fill="#0b3c9c" /><path d="M2 0h15v14H2z" fill="#1a6dff" />
        <text x="6" y="12" fontFamily="Open Sans" fontSize="11" fontWeight="700" fill="#fff">R</text>
        <text x="5" y="20" fontFamily="Open Sans" fontSize="5" fontWeight="700" fill="#fff">RVT</text>
      </svg>
    ),
  },
  {
    name: "Blender",
    art: (
      <svg width="20" height="18" viewBox="0 0 20 18">
        <path d="M1 12 10 5H4V3h6L8 1l2-1 9 8v6z" fill="#f08a1e" />
        <circle cx="12.500" cy="11" r="6" fill="#f08a1e" /><circle cx="12.500" cy="11" r="4" fill="#fff" /><circle cx="12.500" cy="11" r="2.400" fill="#265787" />
      </svg>
    ),
  },
  {
    name: "Rhino",
    art: (
      <svg width="21" height="20" viewBox="0 0 21 20">
        <path d="M0 0h21v20H0z" fill="#000" />
        <path d="M1 2c1 7 5 8 8 9L8 2c3 4 4 6 5 10l6-1c-1 5-4 8-6 9-3-4-9-5-12-9z" fill="#fff" />
        <text x="14" y="8" fontFamily="Open Sans" fontSize="8" fill="#fff">7</text>
      </svg>
    ),
  },
  {
    name: "Bonita",
    art: (
      <svg width="18" height="20" viewBox="0 0 18 20">
        <path d="M2 0c4 0 4 3 4 8H1z" fill="#e87722" />
        <circle cx="9" cy="11" r="8" fill="#3f78c8" /><path d="M9 3a8 8 0 0 1 0 16z" fill="#8a7fd0" />
        <path d="M2 15a8 8 0 0 0 14 0z" fill="#e0634a" /><circle cx="9" cy="11" r="3" fill="#fff" />
      </svg>
    ),
  },
];

const trayIcons: [string, React.ReactNode][] = [
  ["Mostrar ícones", <path key="a" d="m4 13 6-6 6 6" strokeWidth="1.600" />],
  ["Segurança", <g key="b" stroke="none"><path d="M9 1 17 3v7c0 4-4 7-8 8-4-1-8-4-8-8V3z" fill="#fff" /><path d="M9 1v17M1 9h16" stroke="#101010" /><circle cx="14" cy="14" r="5" fill="#1a9e4b" /><path d="m11.500 14 2 2 3-3.500" stroke="#fff" strokeWidth="1.400" /></g>],
  ["OneDrive", <g key="c" stroke="none"><path d="M4 15c-5-2-3-8 1-8 2-6 10-5 11 0 4 1 4 7 0 8z" fill="#1280d8" /><circle cx="14" cy="14" r="5" fill="#d1342b" /><path d="m12 12 4 4m0-4-4 4" stroke="#fff" strokeWidth="1.400" /></g>],
  ["Nuvem", <g key="d" stroke="none"><path d="M4 16c-5-2-3-7 1-7 2-6 10-5 11 0 4 1 4 7 0 7z" fill="#c8c8c8" /><path d="M3 16c2-3 5-5 10-6 5 1 6 5 3 6z" fill="#fff" /></g>],
  ["Câmera", <path key="e" d="M5 7h7v7H5zM12 9l4-2v7l-4-2M6 3q4-2 8 0M6 18q4 2 8 0" strokeWidth="1.400" />],
  ["Bateria", <g key="f"><path d="M5 7h13v8H5z" fill="#fff" /><path d="M18.500 9.500v3M2 2v3M5 2v3M1 5h5v3H1zM3.500 8v4" /></g>],
  ["Rede", <path key="g" d="M4 17A14 14 0 0 1 17 4M8 17a9 9 0 0 1 9-9M12 17a5 5 0 0 1 5-5M15 16h2" />],
  ["Volume", <path key="h" d="M2 8h3l4-4v12l-4-4H2zM12 7q2 3 0 6M14.500 5q4 5 0 10M17 3q5 7 0 14" />],
];

function TaskBar() {
  return (
    <Task>
      <TaskGroup>
        <TaskApp aria-label="Iniciar">
          <svg width="20" height="20" viewBox="0 0 20 20" fill="#fff"><path d="M0 3l8-1v7H0zM9 2l11-2v9H9zM0 10h8v8l-8-1zM9 10h11v10L9 18z" /></svg>
        </TaskApp>
        <TaskApp aria-label="Visão de tarefas">
          <svg width="20" height="18" viewBox="0 0 20 18" fill="none" stroke="#fff" strokeWidth="1.400"><path d="M1 0v3h12V0M1 6h12v6H1zM1 18v-3h12v3M18 0v18M16.500 5h3v4h-3" /></svg>
        </TaskApp>
      </TaskGroup>
      <TaskGroup>
        {taskIcons.map((t) => <TaskApp key={t.name} $run={t.run} $on={t.on} aria-label={t.name}>{t.art}</TaskApp>)}
      </TaskGroup>
      <TaskGroup>
        {trayIcons.map(([n, art]) => (
          <Tray key={n} aria-label={n}><svg width="20" height="20" viewBox="0 0 20 20" fill="none" stroke="#fff" strokeWidth="1.200">{art}</svg></Tray>
        ))}
        <Tray $w={44}>POR</Tray>
        <Tray $w={53}>15:01</Tray>
        <Tray $w={48} aria-label="Notificações">
          <svg width="20" height="20" viewBox="0 0 20 20"><path d="M0 0h20v16h-7l-3 4-3-4H0z" fill="#fff" /><path d="M4 4h12M4 8h12M4 12h8" stroke="#101010" strokeWidth="1.400" /></svg>
        </Tray>
        <Gap $w={17} />
      </TaskGroup>
    </Task>
  );
}

function Annotations() {
  return (
    <Marks width="1920" height="1080" viewBox="0 0 1920 1080" fill="none" stroke={MARK} strokeWidth="6" strokeLinecap="round" strokeLinejoin="round" aria-hidden="true">
      <path d="M198 63C192 78 182 84 178 93c3 8 14 14 29 22M183 102c18-1 38 3 54 6 30 4 60 11 96 12 30 1 55-1 78-1" />
      <path d="M430 88c12-6 25-12 39-14 5 14-10 26-24 40 20 4 42 5 66 6" />
      <path d="M475 205c-9 6-16 12-18 20 3 7 9 11 18 13M471 220c40 2 80 4 128 5 60 2 120 3 175 2" />
      <path d="M823 198h50c-10 7-20 16-30 25 20 0 32 6 40 17-8 10-25 11-42 11" />
      <path d="M1236 32c-3 12-7 22-5 31 8 7 25 10 35 4 10-6 20-6 30-8 0-6 4-12 1-18-10-6-22-10-36-7" />
      <path d="M1257 63c-2 40-3 60-2 87 3 40 10 70 21 100 10 24 23 44 39 67" />
      <path d="M1308 355c15 0 21-4 30-17-1 13-4 22-6 35M1314 380c10-1 20-1 31-1" />
    </Marks>
  );
}

export default function App() {
  return (
    <Shell>
      <Global />
      <TitleBar />
      <Tabs>
        <TabList>
          {tabs.map((t) => (
            <Tab key={t} $kind={t === "Arquivo" ? "file" : t === "Vista" ? "active" : undefined}>{t}</Tab>
          ))}
        </TabList>
        <TabTools>
          <svg width="19" height="12" viewBox="0 0 19 12"><rect x="1" y="1" width="17" height="10" rx="2" fill="#eee" stroke="#444" /><path d="M6.500 8h6l-3-4z" fill="#444" /></svg>
          <Arrow />
        </TabTools>
      </Tabs>
      <RibbonBar />
      <OptionsBar />
      <Work>
        <Properties />
        <Drawing />
        <ProjectBrowser />
      </Work>
      <StatusBar />
      <TaskBar />
      <Annotations />
    </Shell>
  );
}
